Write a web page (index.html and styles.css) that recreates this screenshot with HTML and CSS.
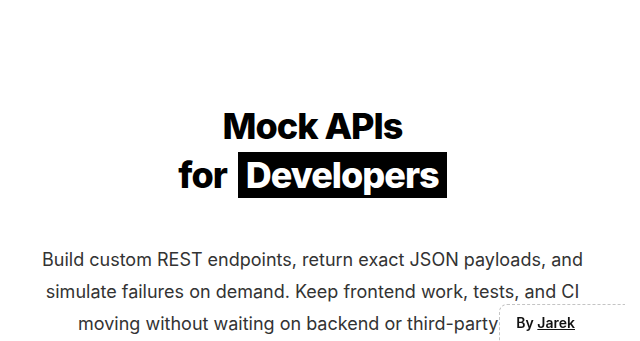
FILE: index.html
```html
<!DOCTYPE html>
<html lang="en">
<head>
    <meta charset="UTF-8">
    <meta name="viewport" content="width=device-width, initial-scale=1.0">
    <title>Mock APIs for Developers</title>
    <link rel="stylesheet" href="styles.css">
</head>
<body>
  <main class="hero">
    <h1 class="hero-title">Mock APIs<br>for <span class="highlight">Developers</span></h1>
    <p class="hero-text">Build custom REST endpoints, return exact JSON payloads, and simulate failures on demand. Keep frontend work, tests, and CI moving without waiting on backend or third-party APIs.</p>
  </main>

  <section class="more"></section>

  <div class="credit">
    <span class="credit-by">By</span> <a href="#" class="credit-link">Jarek</a>
  </div>
</body>
</html>
```

FILE: styles.css
```css
/* General */
html {
    overflow-y: scroll;
}

body {
    font-family: 'Inter', 'Liberation Sans', sans-serif;
    margin: 0;
    padding: 0 15px 0 0;
    background-color: #fff;
    color: #111;
}

/* Hero */
.hero {
    max-width: 560px;
    margin: 0 auto;
    padding: 102px 20px 0;
    text-align: center;
}

.hero-title {
    margin: 0;
    font-size: 36px;
    line-height: 49px;
    font-weight: 800;
    letter-spacing: -1px;
    color: #000;
}

.highlight {
    background-color: #000;
    color: #fff;
    padding: 1px 8px;
    margin-left: 4px;
}

.hero-text {
    margin: 44px 0 0;
    font-size: 18px;
    line-height: 32px;
    color: #333;
}

.more {
    min-height: 5800px;
}

/* Credit badge */
.credit {
    position: fixed;
    right: 15px;
    bottom: -20px;
    padding: 9px 50px 30px 16px;
    background: #fff;
    border-top: 1px dashed #c4c4c4;
    border-left: 1px dashed #c4c4c4;
    border-top-left-radius: 8px;
    font-size: 14px;
    font-weight: 600;
}

.credit-link {
    color: #111;
    text-decoration: underline;
}
```
